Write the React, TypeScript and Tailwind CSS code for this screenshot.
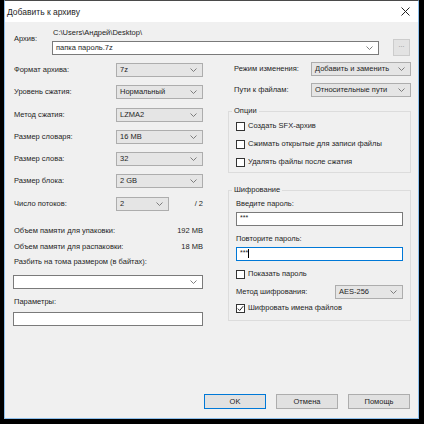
import clsx from 'clsx'

function Chevron() {
  return (
    <svg width="7" height="4" viewBox="0 0 7 4" className="shrink-0">
      <path d="M0.5 0.5 L3.5 3.5 L6.5 0.5" fill="none" stroke="#707070" strokeWidth="0.9" />
    </svg>
  )
}

function Select({ value, className }: { value: string; className?: string }) {
  return (
    <div
      className={clsx(
        'flex h-[14px] items-center justify-between border border-[#adadad] bg-[#e5e5e5] pl-[3px] pr-[5px]',
        className,
      )}
    >
      <span>{value}</span>
      <Chevron />
    </div>
  )
}

function Check({ label, checked }: { label: string; checked?: boolean }) {
  return (
    <div className="flex h-[12px] items-center gap-[3px]">
      <span className="flex h-[9px] w-[9px] items-center justify-center border border-[#333333] bg-white">
        {checked ? (
          <svg width="7" height="7" viewBox="0 0 7 7">
            <path d="M0.8 3.6 L2.7 5.5 L6.2 1.2" fill="none" stroke="#222" strokeWidth="1" />
          </svg>
        ) : null}
      </span>
      <span>{label}</span>
    </div>
  )
}

function LabeledSelect({ label, value }: { label: string; value: string }) {
  return (
    <div className="flex h-[14px] items-center">
      <span className="w-[103px] pl-[1px]">{label}</span>
      <Select value={value} className="w-[87px]" />
    </div>
  )
}

function Button({ label, primary }: { label: string; primary?: boolean }) {
  return (
    <div
      className={clsx(
        'flex h-[15px] w-[62px] items-center justify-center border bg-[#e1e1e1]',
        primary ? 'border-[#0078d7]' : 'border-[#adadad]',
      )}
    >
      {label}
    </div>
  )
}

export default function App() {
  return (
    <div className="h-[424px] w-[424px] bg-black pb-[5px] pl-[4px] pr-[5px] font-['Liberation_Sans',Arial,sans-serif] text-[7.5px] leading-[12px] text-[#1e1e1e]">
      <div className="flex h-full flex-col border-x border-b border-t border-x-[#8fc0ec] border-b-[#8fc0ec] border-t-[#4a4a4a] bg-[#f0f0f0]">
        <header className="flex h-[21px] items-center justify-between bg-white pl-[2px] pr-[8px]">
          <span className="text-[8.5px]">Добавить к архиву</span>
          <svg width="9" height="9" viewBox="0 0 9 9">
            <path d="M0.5 0.5 L8.5 8.5 M8.5 0.5 L0.5 8.5" stroke="#222" strokeWidth="1" />
          </svg>
        </header>

        <div className="flex flex-1 flex-col pb-[9px] pl-[8px] pr-[7px] pt-[5px]">
          <div className="flex">
            <span className="w-[39px] pl-[1px] pt-[6px]">Архив:</span>
            <div className="flex flex-1 flex-col">
              <span className="h-[12px] pl-[1px]">C:\Users\Андрей\Desktop\</span>
              <div className="flex items-center">
                <div className="flex h-[14px] flex-1 items-center justify-between border border-[#7a7a7a] bg-white pl-[3px] pr-[5px]">
                  <span>папка пароль.7z</span>
                  <Chevron />
                </div>
                <div className="ml-[14px] mr-[1px] flex h-[17px] w-[17px] items-start justify-center border border-[#cccccc] bg-[#e3e3e3] text-[7px] leading-[10px] text-[#8a8a8a]">
                  ...
                </div>
              </div>
            </div>
          </div>

          <div className="mt-[6px] flex gap-[25px]">
            <div className="flex w-[190px] flex-col">
              <div className="flex flex-col gap-[8.3px] pt-[1px]">
                <LabeledSelect label="Формат архива:" value="7z" />
                <LabeledSelect label="Уровень сжатия:" value="Нормальный" />
                <LabeledSelect label="Метод сжатия:" value="LZMA2" />
                <LabeledSelect label="Размер словаря:" value="16 MB" />
                <LabeledSelect label="Размер слова:" value="32" />
                <LabeledSelect label="Размер блока:" value="2 GB" />
                <div className="flex h-[14px] items-center">
                  <span className="w-[103px] pl-[1px]">Число потоков:</span>
                  <Select value="2" className="w-[53px]" />
                  <span className="flex-1 text-right">/ 2</span>
                </div>
              </div>

              <div className="mt-[14px] flex justify-between pl-[1px]">
                <span>Объем памяти для упаковки:</span>
                <span>192 MB</span>
              </div>
              <div className="mt-[4px] flex justify-between pl-[1px]">
                <span>Объем памяти для распаковки:</span>
                <span>18 MB</span>
              </div>

              <span className="mt-[3px] pl-[1px]">Разбить на тома размером (в байтах):</span>
              <div className="mt-[7px] flex h-[14px] items-center justify-end border border-[#7a7a7a] bg-white pr-[5px]">
                <Chevron />
              </div>
              <span className="mt-[7px] pl-[1px]">Параметры:</span>
              <div className="mt-[4px] h-[14px] border border-[#7a7a7a] bg-white" />
            </div>

            <div className="flex flex-1 flex-col">
              <div className="flex h-[14px] items-center">
                <span className="w-[83px] pl-[6px]">Режим изменения:</span>
                <Select value="Добавить и заменить" className="flex-1" />
              </div>
              <div className="mt-[7px] flex h-[14px] items-center">
                <span className="w-[83px] pl-[6px]">Пути к файлам:</span>
                <Select value="Относительные пути" className="flex-1" />
              </div>

              <fieldset className="mt-[9px] border border-[#dcdcdc] px-[7px] pb-[4px] pt-[4px]">
                <legend className="ml-[-4px] px-[2px] leading-[10px]">Опции</legend>
                <div className="flex flex-col gap-[6px]">
                  <Check label="Создать SFX-архив" />
                  <Check label="Сжимать открытые для записи файлы" />
                  <Check label="Удалять файлы после сжатия" />
                </div>
              </fieldset>

              <fieldset className="mt-[12px] flex flex-col border border-[#dcdcdc] px-[7px] pb-[6px] pt-[3px]">
                <legend className="ml-[-4px] px-[2px] leading-[10px]">Шифрование</legend>
                <span>Введите пароль:</span>
                <div className="mt-[2px] h-[14px] border border-[#7a7a7a] bg-white pl-[3px] text-[7px] leading-[9px]">
                  ***
                </div>
                <span className="mt-[7px]">Повторите пароль:</span>
                <div className="mt-[2px] flex h-[14px] items-start border border-[#0078d7] bg-white pl-[3px] text-[7px] leading-[9px]">
                  <span>***</span>
                  <span className="mt-[1px] h-[9px] w-px bg-black" />
                </div>
                <div className="mt-[7px]">
                  <Check label="Показать пароль" />
                </div>
                <div className="mt-[5px] flex h-[14px] items-center justify-between">
                  <span>Метод шифрования:</span>
                  <Select value="AES-256" className="w-[68px]" />
                </div>
                <div className="mt-[3px]">
                  <Check label="Шифровать имена файлов" checked />
                </div>
              </fieldset>
            </div>
          </div>

          <div className="flex-1" />

          <div className="mr-[1px] flex justify-end gap-[10px]">
            <Button label="OK" primary />
            <Button label="Отмена" />
            <Button label="Помощь" />
          </div>
        </div>
      </div>
    </div>
  )
}
